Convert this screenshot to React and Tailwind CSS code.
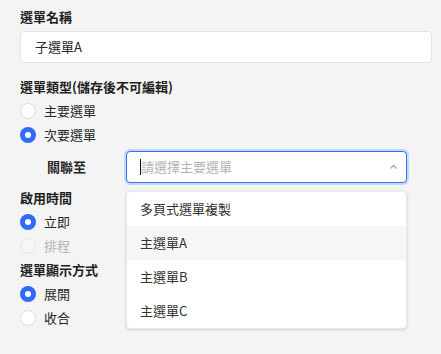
import { useState } from "react";

const font = { fontFamily: '"Noto Sans CJK TC", "Noto Sans", sans-serif' };

function Radio({ checked, disabled, label, first }) {
  return (
    <label className={first ? "mt-[2px] flex items-center h-6 gap-2" : "flex items-center h-6 gap-2"}>
      <span
        className={
          checked
            ? "w-4 h-4 rounded-full bg-[#2f6bf5] flex items-center justify-center"
            : disabled
            ? "w-4 h-4 rounded-full bg-[#f6f6f6] border border-[#e6e6e6]"
            : "w-4 h-4 rounded-full bg-white border border-[#dcdcdc]"
        }
      >
        {checked && <span className="w-1.5 h-1.5 rounded-full bg-white" />}
      </span>
      <span className={disabled ? "text-[13px] text-[#b5b5b5]" : "text-[13px] text-[#262626]"}>
        {label}
      </span>
    </label>
  );
}

export default function App() {
  const [hover] = useState(1);
  const options = ["多頁式選單複製", "主選單A", "主選單B", "主選單C"];

  return (
    <div className="w-[441px] h-[354px] bg-[#f4f4f4] overflow-hidden" style={font}>
      <div className="pl-5 pr-[9px] pt-[7px] flex flex-col">
        {/* name */}
        <div className="text-[13px] leading-5 font-bold text-[#1f1f1f]">選單名稱</div>
        <div className="mt-1 h-8 bg-white border border-[#e3e3e3] rounded-[4px] flex items-center pl-[14px] text-[13px] text-[#262626]">
          子選單A
        </div>

        {/* type */}
        <div className="mt-[14px] text-[13px] leading-5 font-bold text-[#1f1f1f]">
          選單類型(儲存後不可編輯)
        </div>
        <Radio first label="主要選單" />
        <Radio checked label="次要選單" />

        <div className="mt-[4px] flex items-center">
          <div className="w-[106px] pl-[27px] text-[13px] font-bold text-[#262626]">關聯至</div>
          <div className="relative w-[281px]">
            <div className="h-8 bg-white border border-[#3a6ff5] rounded-[4px] ring-2 ring-[#c7d7fb] flex items-center pl-[13px] pr-[8px]">
              <span className="w-px h-4 bg-[#111]" />
              <span className="text-[13px] text-[#b3b3b3]">請選擇主要選單</span>
              <svg className="ml-auto" width="9" height="6" viewBox="0 0 9 6">
                <path d="M1.5 4.5L4.5 1.5L7.5 4.5" fill="none" stroke="#a8a8a8" strokeWidth="1.4" />
              </svg>
            </div>
            <div className="absolute left-0 top-10 w-[281px] bg-white rounded-[4px] border border-[#e8e8e8] shadow-[0_1px_3px_rgba(0,0,0,0.15)] overflow-hidden z-10">
              {options.map((o, i) => (
                <div
                  key={o}
                  className={
                    i === hover
                      ? "h-[34px] flex items-center pl-[13px] text-[13px] text-[#333] bg-[#f6f6f6]"
                      : "h-[34px] flex items-center pl-[13px] text-[13px] text-[#333]"
                  }
                >
                  {o}
                </div>
              ))}
            </div>
          </div>
        </div>

        {/* time */}
        <div className="mt-[5px] text-[13px] leading-5 font-bold text-[#1f1f1f]">啟用時間</div>
        <Radio first label="立即" checked />
        <Radio disabled label="排程" />

        {/* display */}
        <div className="mt-[2px] text-[13px] leading-5 font-bold text-[#1f1f1f]">選單顯示方式</div>
        <Radio first checked label="展開" />
        <Radio label="收合" />
      </div>
    </div>
  );
}
